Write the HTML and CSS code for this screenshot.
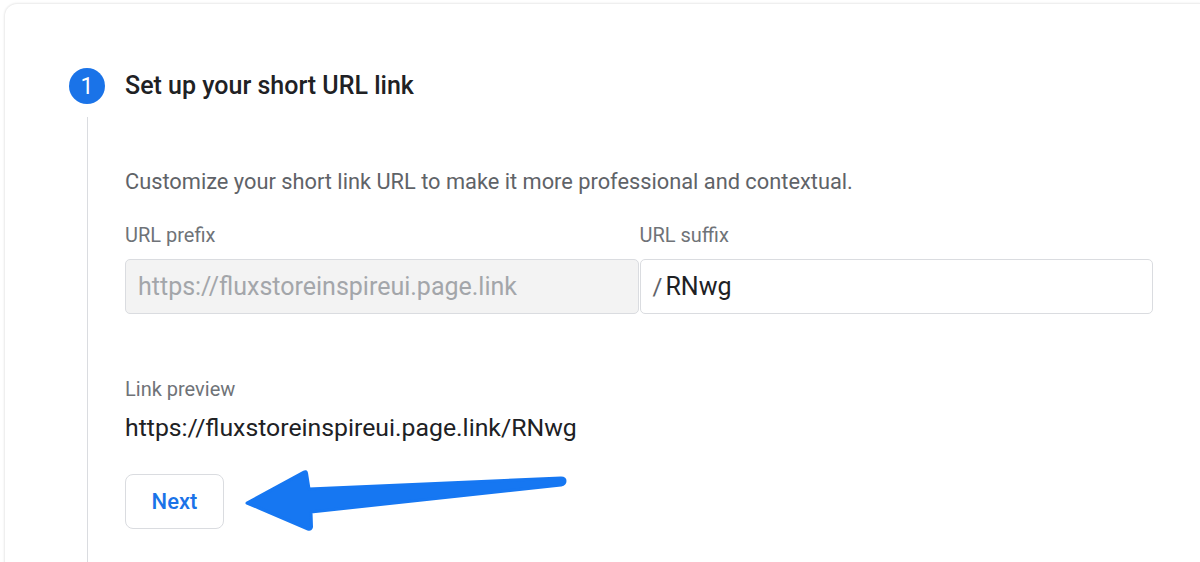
FILE: index.html
```html
<!DOCTYPE html>
<html lang="en">
<head>
<meta charset="utf-8">
<title>Set up your short URL link</title>
<link rel="stylesheet" href="styles.css">
</head>
<body>
<div class="card">
  <div class="step">
    <div class="step-num">1</div>
    <h2 class="step-title">Set up your short URL link</h2>
    <div class="rail"></div>
    <div class="step-body">
      <p class="desc">Customize your short link URL to make it more professional and contextual.</p>
      <div class="fields">
        <div class="field">
          <label class="label">URL prefix</label>
          <div class="input input-disabled">https://fluxstoreinspireui.page.link</div>
        </div>
        <div class="field">
          <label class="label">URL suffix</label>
          <div class="input"><span class="slash">/</span><span class="value">RNwg</span></div>
        </div>
      </div>
      <div class="label preview-label">Link preview</div>
      <div class="preview">https://fluxstoreinspireui.page.link/RNwg</div>
      <button class="btn">Next</button>
    </div>
  </div>
  <svg class="arrow" viewBox="0 0 1200 562" width="1200" height="562" aria-hidden="true">
    <path d="M247 503 L304 472 Q306 471 306.5 473 L309 489 L561 478 Q565 478 565 481 Q565 484 561 485 L311 512 L311.5 527 Q311 530 308 529 Z" fill="#1677f2" stroke="#1677f2" stroke-width="3" stroke-linejoin="round"/>
  </svg>
</div>
</body>
</html>
```

FILE: styles.css
```css
* { box-sizing: border-box; }
html, body { margin: 0; padding: 0; background: #ffffff; }
body {
  font-family: Roboto, "Noto Sans", "Liberation Sans", sans-serif;
  color: #202124;
  overflow: hidden;
  height: 562px;
}
.card {
  position: relative;
  margin: 4px 0 0 5px;
  height: 700px;
  background: #fff;
  border-top-left-radius: 12px;
  box-shadow: 0 0 2px 1px rgba(0, 0, 0, 0.09);
  padding: 64px 0 0 64px;
}
.step {
  display: grid;
  grid-template-columns: 36px 1fr;
  column-gap: 20px;
}
.step-num {
  width: 36px;
  height: 36px;
  border-radius: 50%;
  background: #1a73e8;
  color: #fff;
  font-size: 23px;
  display: flex;
  align-items: center;
  justify-content: center;
  line-height: 1;
}
.step-title {
  margin: 0;
  font-size: 25px;
  font-weight: 500;
  line-height: 36px;
  color: #202124;
}
.rail {
  justify-self: center;
  width: 1px;
  margin-top: 13px;
  background: #dadce0;
  height: 600px;
}
.step-body {
  padding-top: 65px;
  width: 1028px;
}
.desc {
  margin: 0;
  font-size: 21.8px;
  line-height: 26px;
  color: #5f6368;
}
.fields {
  display: flex;
  gap: 1px;
  margin-top: 28px;
}
.field {
  flex: 1;
  display: flex;
  flex-direction: column;
  gap: 12px;
}
.label {
  font-size: 20px;
  line-height: 24px;
  color: #6f7378;
}
.input {
  height: 55px;
  border: 1px solid #dadce0;
  border-radius: 5px;
  display: flex;
  align-items: center;
  padding: 0 12px;
  font-size: 25px;
  color: #202124;
}
.input-disabled {
  background: #f3f3f3;
  color: #a3a6aa;
}
.slash {
  color: #5f6368;
  margin-right: 3px;
  font-size: 24px;
}
.value {
  font-size: 25px;
}
.preview-label {
  margin-top: 63px;
}
.preview {
  margin-top: 13px;
  font-size: 24.8px;
  line-height: 28px;
  color: #202124;
}
.btn {
  margin-top: 32px;
  width: 99px;
  height: 55px;
  border: 1px solid #dadce0;
  border-radius: 8px;
  background: #fff;
  color: #1a73e8;
  font-family: Roboto, "Noto Sans", "Liberation Sans", sans-serif;
  font-size: 22px;
  font-weight: 500;
  padding: 0;
}
.arrow {
  position: absolute;
  left: -5px;
  top: -4px;
  pointer-events: none;
}
```
